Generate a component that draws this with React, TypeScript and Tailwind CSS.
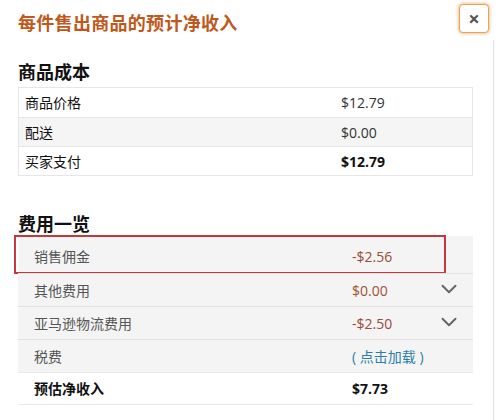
import { ChevronDown } from 'lucide-react';

const cost = [
  { label: '商品价格', value: '$12.79' },
  { label: '配送', value: '$0.00' },
  { label: '买家支付', value: '$12.79', bold: true },
];

const fees = [
  { label: '销售佣金', value: '-$2.56', tone: 'text-[#9a4b3a]', marked: true },
  { label: '其他费用', value: '$0.00', tone: 'text-[#a2522f]', expand: true },
  { label: '亚马逊物流费用', value: '-$2.50', tone: 'text-[#9a4b3a]', expand: true },
  { label: '税费', value: '( 点击加载 )', tone: 'text-[#2b7fa8]' },
];

const font = "font-['Open_Sans','Noto_Sans_CJK_SC',sans-serif]";

export default function App() {
  return (
    <div className={`w-[500px] h-[420px] overflow-hidden bg-white flex flex-col ${font}`}>
      {/* Header */}
      <div className="flex items-start h-[40px] shrink-0">
        <h1 className="ml-[18px] mt-[11px] text-[18px] leading-[24px] font-bold text-[#c0581c] tracking-[0.3px]">
          每件售出商品的预计净收入
        </h1>
        <button className="ml-auto mr-[11px] mt-[4px] w-[30px] h-[29px] rounded-[4px] border border-[#e8a456] bg-white shadow-[0_0_3px_1px_rgba(228,121,17,0.45)] flex items-center justify-center text-[#555] text-[20px] leading-none font-bold">
          ×
        </button>
      </div>

      <div className="flex flex-1 min-h-0">
        <div className="w-[493px] shrink-0">
          {/* Cost */}
          <h2 className="ml-[18px] mt-[20px] text-[18px] leading-[24px] font-bold text-[#111]">商品成本</h2>
          <div className="ml-[18px] mt-[3px] w-[455px] border border-[#e6e6e6]">
            {cost.map((row, i) => (
              <div
                key={row.label}
                className={`grid grid-cols-[316px_1fr] items-center h-[29px] px-[6px] text-[14px] ${
                  i > 0 ? 'border-t border-[#e6e6e6]' : ''
                } ${i === 1 ? 'bg-[#f5f5f5]' : 'bg-white'}`}
              >
                <span className="text-[#111]">{row.label}</span>
                <span className={row.bold ? 'font-bold text-[#111]' : 'text-[#333]'}>{row.value}</span>
              </div>
            ))}
          </div>

          {/* Fees */}
          <h2 className="ml-[18px] mt-[36px] text-[18px] leading-[24px] font-bold text-[#111]">费用一览</h2>
          <div className="ml-[18px] w-[455px]">
            {fees.map((row, i) => (
              <div
                key={row.label}
                className={`relative flex items-center bg-[#f4f4f4] text-[14px] ${
                  i > 0 ? 'h-[33px] border-t border-[#e3e3e3]' : 'h-[37px] pt-[3px]'
                }`}
              >
                <span className="w-[334px] pl-[16px] text-[#555]">{row.label}</span>
                <span className={row.tone}>{row.value}</span>
                {row.expand && (
                  <ChevronDown className="absolute left-[418px] top-[2px] w-[26px] h-[26px] text-[#666]" strokeWidth={1.8} />
                )}
                {row.marked && (
                  <div className="absolute -left-[4px] right-[27px] -top-[1px] -bottom-[1px] border-2 border-[#c7383c]" />
                )}
              </div>
            ))}
            <div className="flex items-center h-[33px] border-t border-[#eaeaea] border-b text-[14px] bg-white">
              <span className="w-[334px] pl-[16px] font-bold text-[#111]">预估净收入</span>
              <span className="font-bold text-[#111]">$7.73</span>
            </div>
          </div>
        </div>
        <div className="w-px bg-[#e2e2e2]" />
      </div>
    </div>
  );
}
